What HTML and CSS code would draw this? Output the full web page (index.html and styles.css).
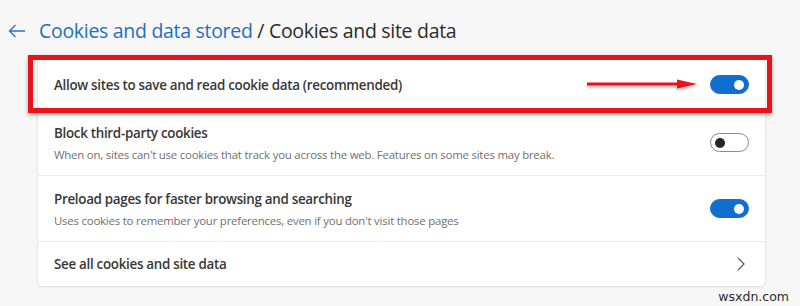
FILE: index.html
```html
<!DOCTYPE html>
<html lang="en">
<head>
    <meta charset="UTF-8">
    <meta name="viewport" content="width=device-width, initial-scale=1.0">
    <title>Cookies and site data</title>
    <link rel="stylesheet" href="styles.css">
</head>
<body>
    <div class="page">
        <div class="header">
            <svg class="back" width="18" height="14" viewBox="0 0 18 14">
                <path d="M17 7H1.5M7.5 1L1.5 7l6 6" fill="none" stroke="#2b72c2" stroke-width="1.3"/>
            </svg>
            <h1><span class="crumb">Cookies and data stored</span> / Cookies and site data</h1>
        </div>

        <div class="card">
            <div class="row first">
                <div class="text">
                    <p class="label">Allow sites to save and read cookie data (recommended)</p>
                </div>
                <span class="toggle on"></span>
            </div>
            <div class="row">
                <div class="text">
                    <p class="label">Block third-party cookies</p>
                    <p class="desc">When on, sites can't use cookies that track you across the web. Features on some sites may break.</p>
                </div>
                <span class="toggle"></span>
            </div>
            <div class="row">
                <div class="text">
                    <p class="label">Preload pages for faster browsing and searching</p>
                    <p class="desc">Uses cookies to remember your preferences, even if you don't visit those pages</p>
                </div>
                <span class="toggle on"></span>
            </div>
            <div class="row last">
                <div class="text">
                    <p class="label">See all cookies and site data</p>
                </div>
                <svg class="chevron" width="8" height="14" viewBox="0 0 8 14">
                    <path d="M1 1l6 6-6 6" fill="none" stroke="#555" stroke-width="1.2"/>
                </svg>
            </div>

            <!-- annotation drawn over the screenshot -->
            <div class="mark"></div>
            <svg class="pointer" width="112" height="14" viewBox="0 0 112 14">
                <path d="M0 7H92" stroke="#e8141a" stroke-width="3"/>
                <path d="M90 2.5L110 7L90 11.5Z" fill="#e8141a"/>
            </svg>
        </div>

        <div class="watermark">wsxdn.com</div>
    </div>
</body>
</html>
```

FILE: styles.css
```css
*{
    margin: 0;
    padding: 0;
    box-sizing: border-box;
}
body{
    background-color: #f7f7f7;
    font-family: "Open Sans", "Noto Sans", sans-serif;
    color: #2b2b2b;
}
.page{
    width: 800px;
    height: 306px;
    position: relative;
    overflow: hidden;
}
.header{
    display: flex;
    align-items: center;
    height: 60px;
    padding: 0 0 0 8px;
}
.back{
    margin-right: 13px;
    margin-top: 1px;
}
.header h1{
    font-size: 19.5px;
    font-weight: 400;
    color: #2b2b2b;
    letter-spacing: -0.3px;
}
.crumb{
    color: #1f6fbf;
}
.card{
    position: relative;
    margin-left: 38px;
    width: 727px;
    background-color: #fff;
    border-radius: 4px;
    box-shadow: 0 0 2px rgba(0,0,0,0.16), 0 1px 3px rgba(0,0,0,0.06);
}
.row{
    display: flex;
    align-items: center;
    justify-content: space-between;
    padding: 0 16px;
    min-height: 66px;
    border-top: 1px solid #ececec;
}
.row.first{
    min-height: 49px;
    border-top: none;
}
.row.last{
    min-height: 45px;
}
.label{
    font-size: 13.4px;
    font-weight: 600;
    color: #383838;
    letter-spacing: -0.3px;
}
.desc{
    font-size: 11.4px;
    color: #707070;
    margin-top: 5px;
    letter-spacing: -0.2px;
}
.toggle{
    width: 39px;
    height: 19px;
    border-radius: 10px;
    border: 1px solid #8a8a8a;
    background-color: #fff;
    position: relative;
    margin-right: 0;
    flex-shrink: 0;
}
.toggle::after{
    content: "";
    position: absolute;
    left: 4px;
    top: 3.5px;
    width: 10px;
    height: 10px;
    border-radius: 50%;
    background-color: #262626;
}
.toggle.on{
    background-color: #0f6fd0;
    border-color: #0f6fd0;
}
.toggle.on::after{
    left: auto;
    right: 4px;
    background-color: #fff;
}
.chevron{
    margin-right: 4px;
}
.mark{
    position: absolute;
    left: -10px;
    top: -5px;
    width: 744px;
    height: 58px;
    border: 5px solid #e8141a;
    box-shadow: 0 2px 4px rgba(0,0,0,0.35);
    pointer-events: none;
}
.pointer{
    position: absolute;
    left: 549px;
    top: 17px;
    filter: drop-shadow(0 2px 1.5px rgba(0,0,0,0.3));
}
.watermark{
    position: absolute;
    right: 11px;
    bottom: 2px;
    font-family: "DejaVu Sans", sans-serif;
    font-size: 12.5px;
    color: #2a2a2a;
}
```
